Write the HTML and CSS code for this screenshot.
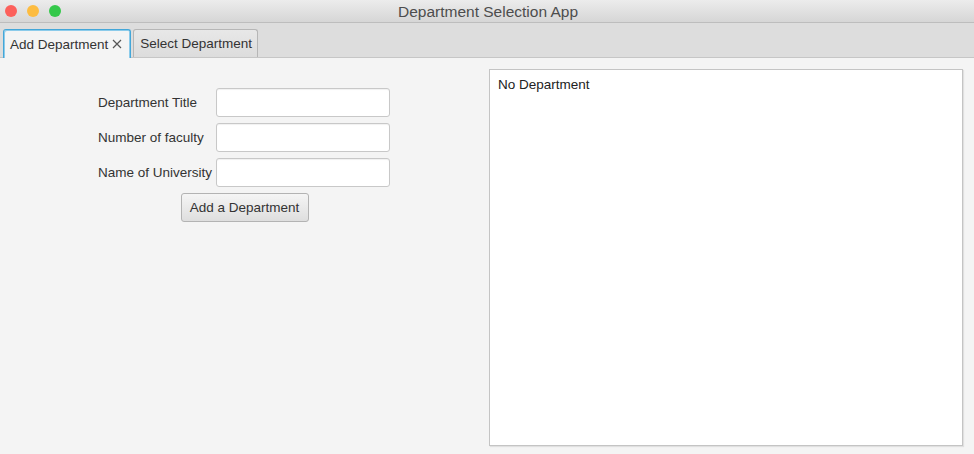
FILE: index.html
```html
<!DOCTYPE html>
<html>
<head>
<meta charset="utf-8">
<link rel="stylesheet" href="styles.css">
</head>
<body>
<div class="window">
  <div class="titlebar">
    <div class="lights">
      <span class="light red"></span>
      <span class="light yellow"></span>
      <span class="light green"></span>
    </div>
    <div class="title">Department Selection App</div>
  </div>
  <div class="tabbar">
    <div class="tab active">Add Department<svg class="close" width="10" height="10" viewBox="0 0 10 10"><path d="M1 1L9 9M9 1L1 9" stroke="#555" stroke-width="1.2" fill="none"/></svg></div>
    <div class="tab">Select Department</div>
  </div>
  <div class="content">
    <div class="formpane">
      <div class="form">
        <label class="label">Department Title</label>
        <div class="input"></div>
        <label class="label">Number of faculty</label>
        <div class="input"></div>
        <label class="label">Name of University</label>
        <div class="input"></div>
        <div class="btnrow"><button class="btn">Add a Department</button></div>
      </div>
    </div>
    <div class="list">
      <div class="item">No Department</div>
    </div>
  </div>
</div>
</body>
</html>
```
FILE: styles.css
```css
* { box-sizing: border-box; }
html, body { margin: 0; padding: 0; }
body {
  width: 974px;
  height: 454px;
  overflow: hidden;
  background: #f4f4f4;
  font-family: "Liberation Sans", Arial, sans-serif;
  font-size: 13.5px;
  color: #333;
}
.window { display: flex; flex-direction: column; height: 454px; }
.titlebar {
  height: 23px;
  flex: none;
  background: linear-gradient(#ececec, #d6d6d6);
  border-bottom: 1px solid #bdbdbd;
  display: flex;
  align-items: center;
  position: relative;
}
.lights { display: flex; gap: 10px; padding-left: 5px; }
.light { width: 12px; height: 12px; border-radius: 50%; display: block; }
.red { background: #fc605b; }
.yellow { background: #fdbc40; }
.green { background: #34c84a; }
.title {
  position: absolute;
  left: 0; right: 0; top: 0;
  line-height: 23px;
  text-align: center;
  font-size: 15.5px;
  color: #4d4d4d;
  padding-left: 2px;
}
.tabbar {
  height: 35px;
  flex: none;
  background: #dddddd;
  border-bottom: 1px solid #c6c6c6;
  display: flex;
  align-items: flex-end;
  padding-left: 3px;
  gap: 2px;
}
.tab {
  height: 28px;
  padding: 0 5px 0 6px;
  border: 1px solid #b6b6b6;
  border-bottom: none;
  border-radius: 3px 3px 0 0;
  background: linear-gradient(#e8e8e8, #dcdcdc);
  line-height: 27px;
  font-size: 13.5px;
  color: #333;
  white-space: nowrap;
  display: flex;
  align-items: center;
}
.tab.active {
  height: 29px;
  border: 1px solid #43a6d8;
  border-bottom: none;
  box-shadow: inset 1px 1px 0 #8ccbea, inset -1px 0 0 #8ccbea;
  background: #f4f4f4;
  margin-bottom: -1px;
  padding: 0 8px 0 6px;
}
.close { margin-left: 4px; display: block; }
.content { flex: 1; display: flex; min-height: 0; }
.formpane { width: 489px; flex: none; padding: 30px 0 0 98px; }
.form {
  display: grid;
  grid-template-columns: 118px 174px;
  grid-auto-rows: 29px;
  row-gap: 6px;
  width: 292px;
}
.label { display: flex; align-items: center; font-size: 13.5px; color: #333; white-space: nowrap; }
.input {
  background: #fff;
  border: 1px solid #c8c8c8;
  border-radius: 3px;
  box-shadow: inset 0 1px 1px rgba(0,0,0,0.06);
}
.btnrow { grid-column: 1 / 3; display: flex; justify-content: center; padding-left: 1px; }
.btn {
  width: 128px;
  height: 29px;
  border: 1px solid #b3b3b3;
  border-radius: 3px;
  background: linear-gradient(#f5f5f5, #dedede);
  font-family: inherit;
  font-size: 13.5px;
  color: #333;
  padding: 0;
}
.list {
  flex: 1;
  margin: 11px 11px 8px 0;
  background: #fff;
  border: 1px solid #c4c4c4;
  box-shadow: 1px 1px 1px rgba(0,0,0,0.08);
  padding: 5px 8px;
}
.item { font-size: 13.5px; color: #222; line-height: 19px; }
```
